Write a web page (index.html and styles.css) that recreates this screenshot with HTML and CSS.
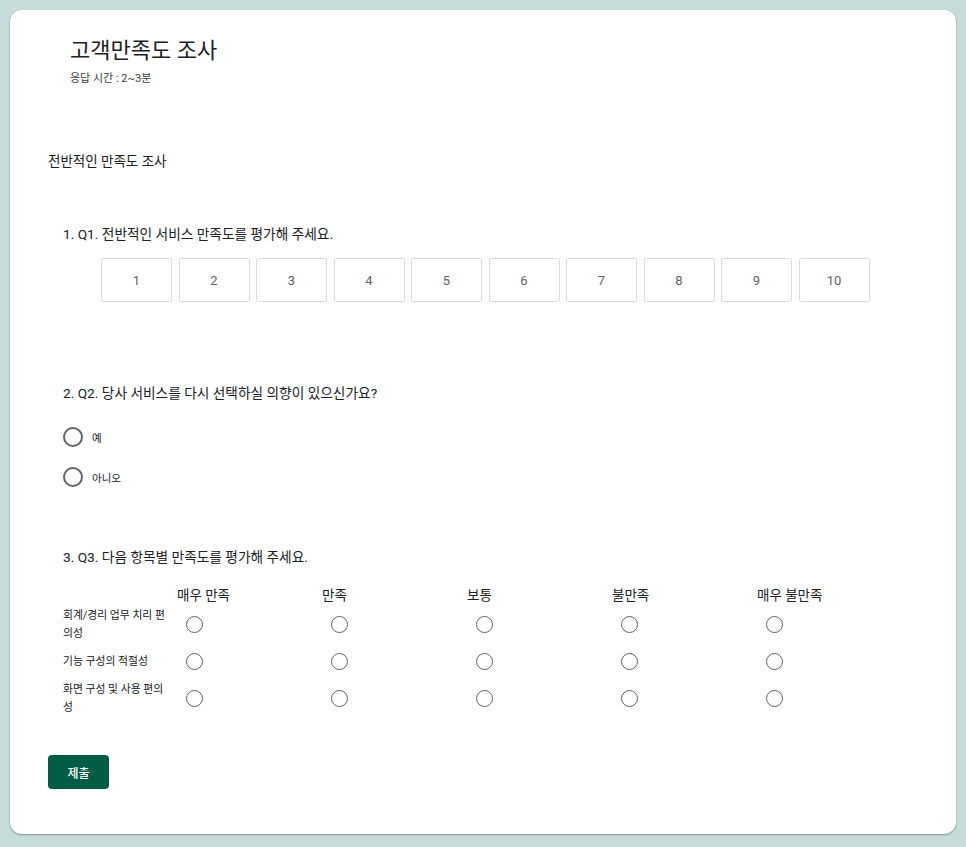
FILE: index.html
```html
<!DOCTYPE html>
<html lang="ko">
<head>
<meta charset="utf-8">
<link rel="stylesheet" href="styles.css">
</head>
<body>
<div class="card">
  <div class="header">
    <h1 class="title">고객만족도 조사</h1>
    <div class="subtitle">응답 시간 : 2~3분</div>
  </div>
  <div class="section">전반적인 만족도 조사</div>

  <div class="q q1">
    <div class="qtitle">1. Q1. 전반적인 서비스 만족도를 평가해 주세요.</div>
    <div class="scale">
      <div class="box">1</div><div class="box">2</div><div class="box">3</div><div class="box">4</div><div class="box">5</div>
      <div class="box">6</div><div class="box">7</div><div class="box">8</div><div class="box">9</div><div class="box">10</div>
    </div>
  </div>

  <div class="q q2">
    <div class="qtitle">2. Q2. 당사 서비스를 다시 선택하실 의향이 있으신가요?</div>
    <div class="opts">
      <div class="opt"><span class="radio big"></span><span class="optlabel">예</span></div>
      <div class="opt"><span class="radio big"></span><span class="optlabel">아니오</span></div>
    </div>
  </div>

  <div class="q q3">
    <div class="qtitle">3. Q3. 다음 항목별 만족도를 평가해 주세요.</div>
    <div class="grid">
      <div class="gh"></div>
      <div class="gh">매우 만족</div>
      <div class="gh">만족</div>
      <div class="gh">보통</div>
      <div class="gh">불만족</div>
      <div class="gh">매우 불만족</div>

      <div class="rl">회계/경리 업무 치리 편의성</div>
      <div class="gc"><span class="radio"></span></div>
      <div class="gc"><span class="radio"></span></div>
      <div class="gc"><span class="radio"></span></div>
      <div class="gc"><span class="radio"></span></div>
      <div class="gc"><span class="radio"></span></div>

      <div class="rl">기능 구성의 적절성</div>
      <div class="gc"><span class="radio"></span></div>
      <div class="gc"><span class="radio"></span></div>
      <div class="gc"><span class="radio"></span></div>
      <div class="gc"><span class="radio"></span></div>
      <div class="gc"><span class="radio"></span></div>

      <div class="rl">화면 구성 및 사용 편의성</div>
      <div class="gc"><span class="radio"></span></div>
      <div class="gc"><span class="radio"></span></div>
      <div class="gc"><span class="radio"></span></div>
      <div class="gc"><span class="radio"></span></div>
      <div class="gc"><span class="radio"></span></div>
    </div>
  </div>

  <button class="submit">제출</button>
</div>
</body>
</html>
```
FILE: styles.css
```css
html, body {
  margin: 0;
  padding: 0;
}
body {
  background: #c6dcda;
  font-family: Roboto, "Noto Sans CJK KR", sans-serif;
  color: #202124;
  padding: 10px;
  height: 847px;
  box-sizing: border-box;
}
.card {
  background: #fff;
  border-radius: 12px;
  box-shadow: 0 1px 2px rgba(0,0,0,0.35);
  width: 946px;
  height: 824px;
  box-sizing: border-box;
  padding: 27px 38px 0 38px;
}
.header {
  padding-left: 22px;
}
.title {
  margin: 0;
  font-size: 22px;
  font-weight: 400;
  line-height: 28px;
}
.subtitle {
  margin-top: 7px;
  font-size: 11px;
  line-height: 14px;
  color: #3c4043;
}
.section {
  margin-top: 66px;
  font-size: 13.5px;
  line-height: 18px;
}
.q {
  padding-left: 15px;
}
.qtitle {
  font-size: 13.7px;
  line-height: 18px;
}
.q1 {
  margin-top: 55px;
}
.scale {
  display: flex;
  gap: 6.5px;
  margin-top: 15px;
  margin-left: 38px;
}
.box {
  width: 71px;
  height: 44px;
  box-sizing: border-box;
  border: 1px solid #dadce0;
  border-radius: 2px;
  display: flex;
  align-items: center;
  justify-content: center;
  font-size: 13px;
  color: #5f6368;
}
.q2 {
  margin-top: 82px;
}
.opts {
  margin-top: 25px;
  display: flex;
  flex-direction: column;
  gap: 20px;
}
.opt {
  display: flex;
  align-items: center;
  gap: 9px;
}
.optlabel {
  font-size: 10.5px;
  color: #202124;
}
.radio {
  display: inline-block;
  width: 17px;
  height: 17px;
  box-sizing: border-box;
  border: 1.5px solid #5f6368;
  border-radius: 50%;
}
.radio.big {
  width: 20px;
  height: 20px;
  border-width: 2px;
}
.q3 {
  margin-top: 61px;
}
.grid {
  margin-top: 20px;
  display: grid;
  grid-template-columns: 114px repeat(5, 145px);
  grid-template-rows: 20px repeat(3, 37px);
}
.gh {
  font-size: 13.5px;
  line-height: 18px;
}
.rl {
  font-size: 10.8px;
  line-height: 18px;
  padding-right: 6px;
  display: flex;
  align-items: center;
}
.gc {
  display: flex;
  align-items: center;
  padding-left: 9px;
}
.submit {
  margin-top: 38px;
  width: 61px;
  height: 34px;
  border: none;
  border-radius: 4px;
  background: #005c45;
  color: #fff;
  font-family: Roboto, "Noto Sans CJK KR", sans-serif;
  font-size: 12px;
  font-weight: 500;
  padding: 0;
}
```
